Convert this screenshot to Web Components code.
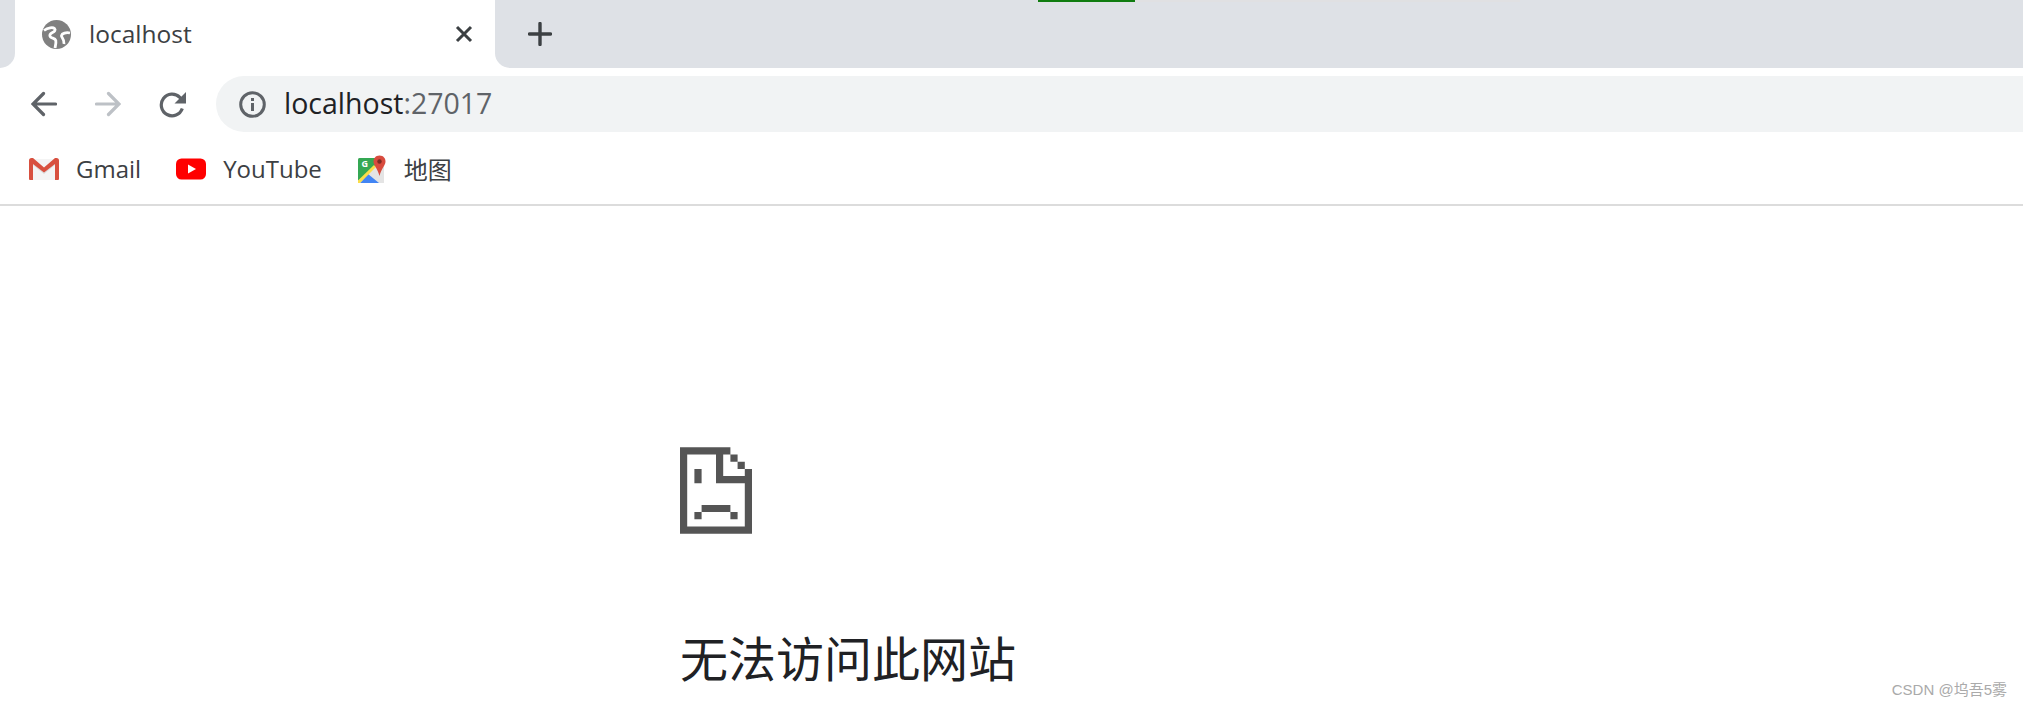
<!DOCTYPE html>
<html lang="zh">
<head>
<meta charset="utf-8">
<title>localhost</title>
<style>
  html, body { margin: 0; padding: 0; background: #fff; }
  body { width: 2023px; height: 707px; overflow: hidden; position: relative;
    font-family: "Open Sans", "Noto Sans CJK SC", sans-serif; }
</style>
</head>
<body>
<tab-strip title-text="localhost"></tab-strip>
<nav-toolbar><span slot="host">localhost</span><span slot="port">:27017</span></nav-toolbar>
<bookmark-bar>
  <bookmark-item label="Gmail" kind="gmail"></bookmark-item>
  <bookmark-item label="YouTube" kind="youtube"></bookmark-item>
  <bookmark-item label="地图" kind="maps"></bookmark-item>
</bookmark-bar>
<error-page heading="无法访问此网站"></error-page>
<csdn-mark>CSDN @坞吾5雾</csdn-mark>

<script>
const tabStripTemplate = document.createElement('template');
tabStripTemplate.innerHTML = `
<style>
  :host { display: flex; height: 68px; background: #fff; position: relative; }
  .edge { width: 15px; flex: none; background: #dee1e6; border-bottom-right-radius: 15px; }
  .tab {
    width: 480px; flex: none; box-sizing: border-box; padding: 0 22px 0 27px;
    display: flex; align-items: center; background: #fff;
    border-radius: 16px 16px 0 0;
  }
  .globe { width: 29px; height: 29px; flex: none; }
  .title { margin-left: 18px; flex: 1; font-size: 24.5px; color: #3c4043; padding-bottom: 2px; }
  .rest {
    flex: 1; background: #dee1e6; border-bottom-left-radius: 15px;
    display: flex; align-items: center; padding-left: 33px;
  }
  svg { display: block; }
  .load { position: absolute; top: 0; left: 1038px; width: 482px; height: 2px; background: #e0e0e2; }
  .load i { display: block; width: 97px; height: 2px; background: #107c10; }
</style>
<div class="edge"></div>
<div class="tab">
  <svg class="globe" viewBox="0 0 29 29">
    <circle cx="14.500" cy="14.500" r="14.500" fill="#808080"/>
    <path d="M2 10.500C6 7.500 11 7 12.500 8.500C14 10 12.500 11.500 10.500 12.500C8 13.800 7 15.500 8.500 17C10 18.500 13 18 13.800 20.500C14.300 22.500 13.500 25.500 13 28" fill="none" stroke="#fff" stroke-width="2.800"/>
    <path d="M28 13C24 12 20 13.500 19.500 15.500C19 17.500 22.500 18.500 22 24" fill="none" stroke="#fff" stroke-width="2.800"/>
  </svg>
  <span class="title"></span>
  <svg width="18" height="18" viewBox="0 0 18 18"><path d="M2 2L16 16M16 2L2 16" stroke="#3c4043" stroke-width="3" fill="none"/></svg>
</div>
<div class="rest">
  <svg width="24" height="24" viewBox="0 0 24 24"><path d="M12 1.500V22.500M1.500 12H22.500" stroke="#3c4043" stroke-width="3.400" stroke-linecap="round" fill="none"/></svg>
</div>
<div class="load"><i></i></div>
`;
class TabStrip extends HTMLElement {
  constructor() {
    super();
    this.attachShadow({mode: 'open'});
    this.shadowRoot.appendChild(tabStripTemplate.content.cloneNode(true));
    this.shadowRoot.querySelector('.title').textContent = this.getAttribute('title-text');
  }
}
customElements.define('tab-strip', TabStrip);

const navToolbarTemplate = document.createElement('template');
navToolbarTemplate.innerHTML = `
<style>
  :host { display: flex; height: 69px; box-sizing: border-box; padding: 8px 0 5px 31px; background: #fff; align-items: stretch; }
  .btn { flex: none; display: flex; align-items: center; }
  svg { display: block; }
  .omni {
    flex: 1; margin-left: 30px; background: #f1f3f4; border-radius: 28px 0 0 28px;
    display: flex; align-items: center; padding-left: 23px;
  }
  .url { margin-left: 18px; font-size: 28.500px; color: #202124; padding-bottom: 2px; }
  .port { color: #5f6368; }
</style>
<div class="btn"><svg width="26" height="26" viewBox="0 0 26 26"><path d="M24.500 13H3M12.500 2.500L2 13L12.500 23.500" stroke="#5f6368" stroke-width="3.200" stroke-linecap="round" fill="none"/></svg></div>
<div class="btn" style="margin-left:38px"><svg width="26" height="26" viewBox="0 0 26 26"><path d="M1.500 13H23M13.500 2.500L24 13L13.500 23.500" stroke="#bdc1c6" stroke-width="3.200" stroke-linecap="round" fill="none"/></svg></div>
<div class="btn" style="margin-left:38px"><svg width="27" height="27" viewBox="0 0 27 27"><path d="M23.300 17.500A10.800 10.800 0 1 1 20.800 6.400L24 9.600" stroke="#5f6368" stroke-width="3.200" fill="none"/><path d="M27 1V12.500H15.500Z" fill="#5f6368"/></svg></div>
<div class="omni">
  <svg width="27" height="27" viewBox="0 0 27 27"><circle cx="13.500" cy="13.500" r="11.800" stroke="#5f6368" stroke-width="3" fill="none"/><path d="M12 12h3v8h-3zM12 7h3v3h-3z" fill="#5f6368"/></svg>
  <span class="url"><slot name="host"></slot><span class="port"><slot name="port"></slot></span></span>
</div>
`;
class NavToolbar extends HTMLElement {
  constructor() {
    super();
    this.attachShadow({mode: 'open'});
    this.shadowRoot.appendChild(navToolbarTemplate.content.cloneNode(true));
  }
}
customElements.define('nav-toolbar', NavToolbar);

const bookmarkBarTemplate = document.createElement('template');
bookmarkBarTemplate.innerHTML = `
<style>
  :host { display: flex; height: 69px; box-sizing: border-box; background: #fff; border-bottom: 2px solid #dcdcdc; align-items: center; padding: 0 0 4px 29px; gap: 35px; }
</style>
<slot></slot>
`;
class BookmarkBar extends HTMLElement {
  constructor() {
    super();
    this.attachShadow({mode: 'open'});
    this.shadowRoot.appendChild(bookmarkBarTemplate.content.cloneNode(true));
  }
}
customElements.define('bookmark-bar', BookmarkBar);

const bookmarkIcons = {
  gmail: `<svg width="30" height="30" viewBox="0 0 30 30">
    <path d="M2 5H28V26H2Z" fill="#f4f4f4"/>
    <path d="M4 8L15 18L26 8V11L15 20L4 11Z" fill="#dcdcdc"/>
    <path d="M0 6.500Q0 4 2.500 4H4L15 13.500L26 4H27.500Q30 4 30 6.500V25Q30 26 29 26H26V10L15 18.500L4 10V26H1Q0 26 0 25Z" fill="#d8503f"/>
  </svg>`,
  youtube: `<svg width="30" height="30" viewBox="0 0 30 30">
    <rect x="0" y="4.500" width="30" height="21" rx="5.500" fill="#f00"/>
    <path d="M12 10.500L20 15L12 19.500Z" fill="#fff"/>
  </svg>`,
  maps: `<svg width="30" height="30" viewBox="0 0 30 30">
    <path d="M1 5.500Q1 4 2.500 4H27V29H1Z" fill="#e4e4e4"/>
    <path d="M1 5.500Q1 4 2.500 4H18V13L1 27Z" fill="#34a853"/>
    <path d="M11 20L22 29H3Z" fill="#4285f4"/>
    <path d="M1 26.500L17 11L19 13L3 29H1Z" fill="#fbdd4a"/>
    <path d="M22.500 1.500C18.500 1.500 16.500 4.500 16.500 7.500C16.500 11.500 20.500 14 22.500 22C24.500 14 28.500 11.500 28.500 7.500C28.500 4.500 26.500 1.500 22.500 1.500Z" fill="#d84b3e"/>
    <circle cx="22.500" cy="7.500" r="2.200" fill="#7c2a22"/>
    <text x="4.500" y="13" font-family="Open Sans, sans-serif" font-weight="700" font-size="9" fill="#fff">G</text>
  </svg>`
};
const bookmarkItemTemplate = document.createElement('template');
bookmarkItemTemplate.innerHTML = `
<style>
  :host { display: inline-flex; align-items: center; gap: 17px; font-size: 24px; color: #3c4043; }
  .icon { width: 30px; height: 30px; flex: none; }
  svg { display: block; }
</style>
<span class="icon"></span><span class="label"></span>
`;
class BookmarkItem extends HTMLElement {
  constructor() {
    super();
    this.attachShadow({mode: 'open'});
    this.shadowRoot.appendChild(bookmarkItemTemplate.content.cloneNode(true));
    this.shadowRoot.querySelector('.icon').innerHTML = bookmarkIcons[this.getAttribute('kind')];
    this.shadowRoot.querySelector('.label').textContent = this.getAttribute('label');
  }
}
customElements.define('bookmark-item', BookmarkItem);

const errorPageTemplate = document.createElement('template');
errorPageTemplate.innerHTML = `
<style>
  :host { display: block; padding: 241px 0 0 680px; background: #fff; }
  svg { display: block; }
  h1 { margin: 92px 0 0; font-weight: 400; font-size: 48px; line-height: 60px; color: #202124;
    font-family: "Noto Sans CJK SC", sans-serif; }
</style>
<svg width="72" height="87" viewBox="0 0 10 12" fill="#555">
  <path d="M0 0H7V1H8V2H9V3H10V12H0ZM1 1V11H9V5H5V1ZM6 1V4H9V3H8V2H7V1Z" fill-rule="evenodd"/>
  <path d="M2 3H3V5H2ZM3 8H7V9H3ZM2 9H3V10H2ZM7 9H8V10H7Z"/>
</svg>
<h1></h1>
`;
class ErrorPage extends HTMLElement {
  constructor() {
    super();
    this.attachShadow({mode: 'open'});
    this.shadowRoot.appendChild(errorPageTemplate.content.cloneNode(true));
    this.shadowRoot.querySelector('h1').textContent = this.getAttribute('heading');
  }
}
customElements.define('error-page', ErrorPage);

const csdnMarkTemplate = document.createElement('template');
csdnMarkTemplate.innerHTML = `
<style>
  :host { position: absolute; right: 16px; bottom: 7px; font-size: 15px; line-height: 20px; color: #aaa;
    font-family: "Liberation Sans", "Noto Sans CJK SC", sans-serif; }
</style>
<slot></slot>
`;
class CsdnMark extends HTMLElement {
  constructor() {
    super();
    this.attachShadow({mode: 'open'});
    this.shadowRoot.appendChild(csdnMarkTemplate.content.cloneNode(true));
  }
}
customElements.define('csdn-mark', CsdnMark);
</script>
</body>
</html>
